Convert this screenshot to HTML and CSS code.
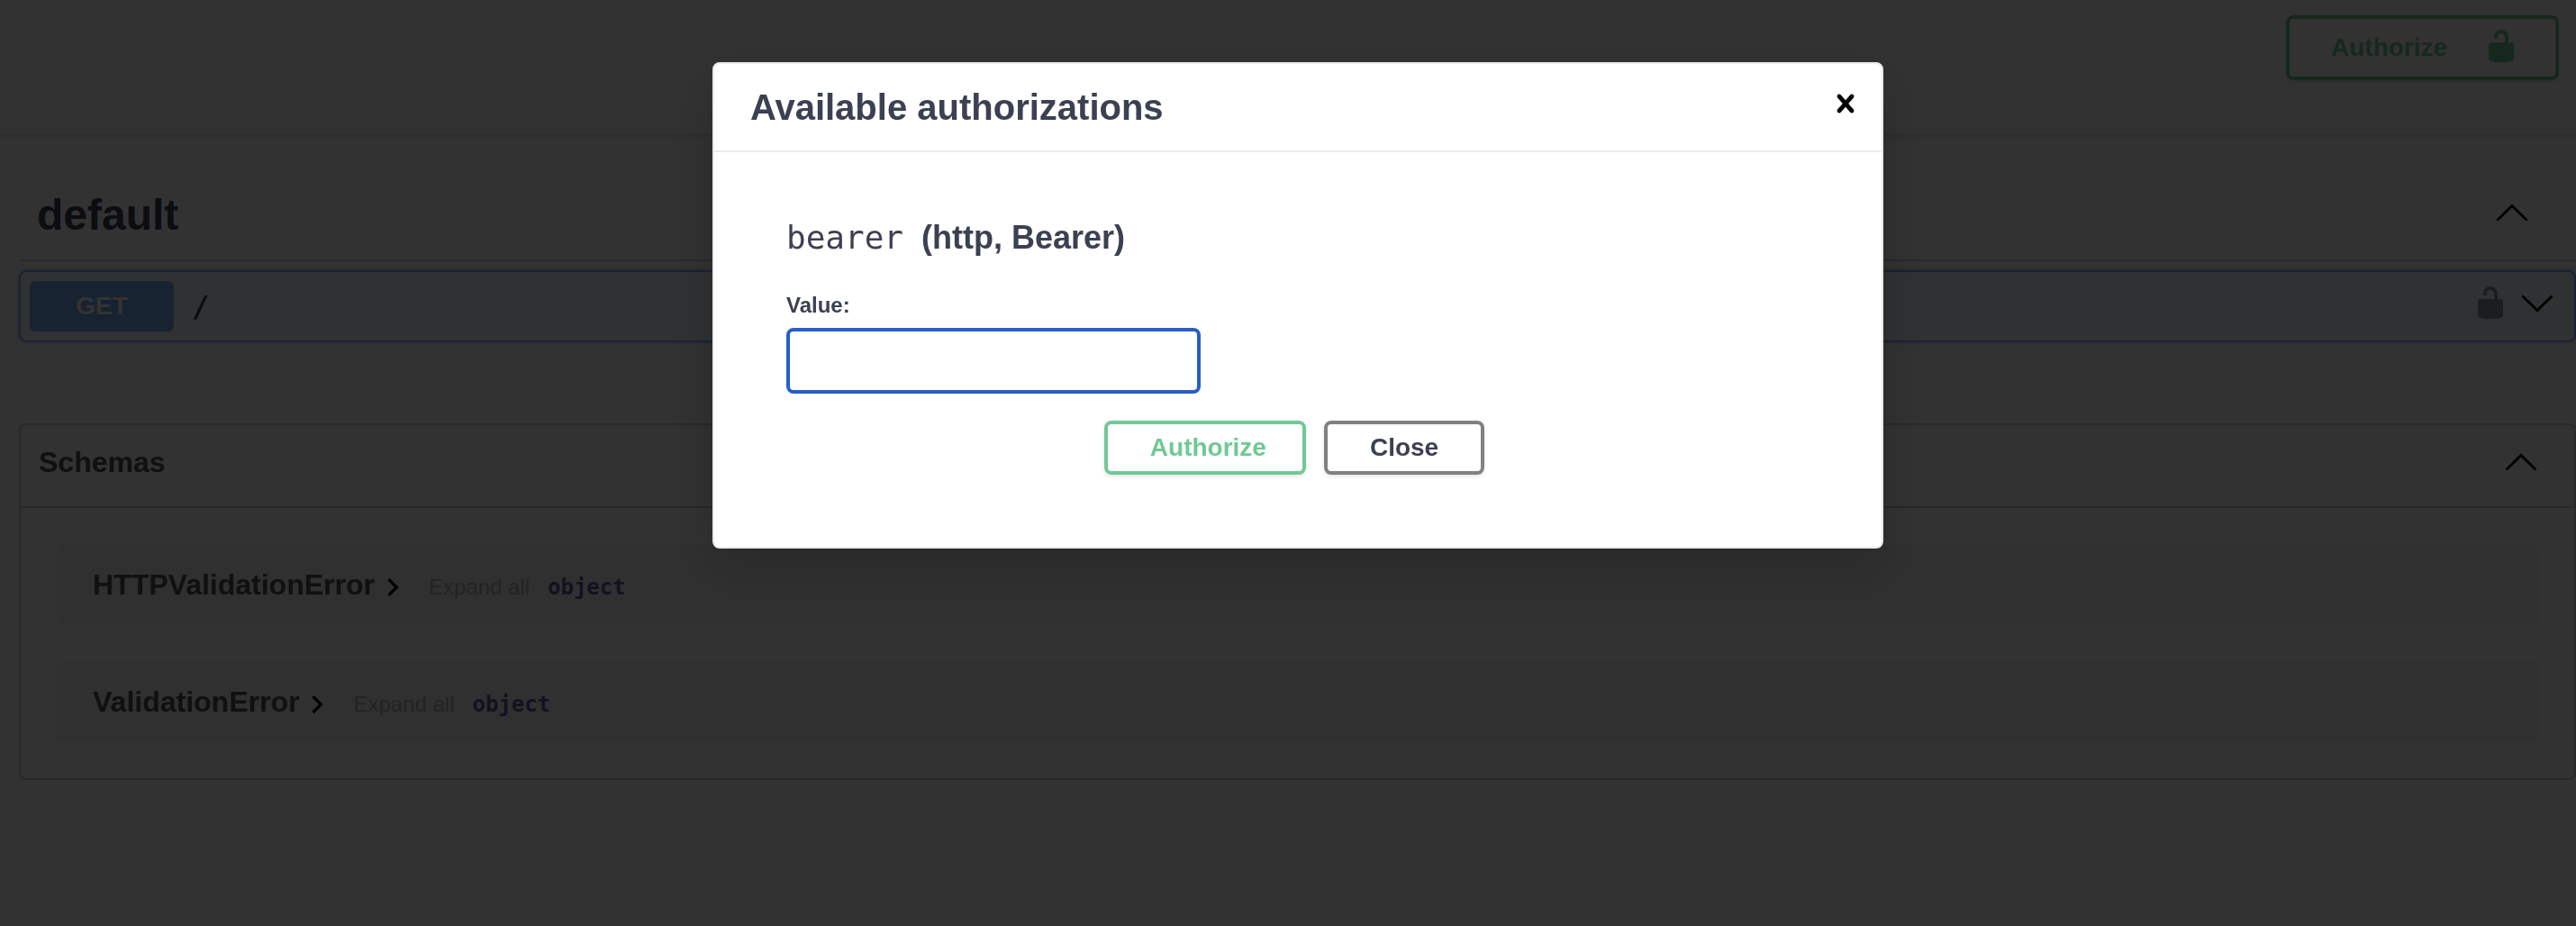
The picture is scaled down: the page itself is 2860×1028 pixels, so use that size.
FILE: index.html
```
<!DOCTYPE html>
<html lang="en">
<head>
<meta charset="utf-8">
<title>API documentation</title>
<link rel="stylesheet" href="styles.css">
</head>
<body>
<svg class="defs" width="0" height="0">
  <symbol id="unlocked" viewBox="0 0 20 20"><path d="M15.8 8H14V5.6C14 2.703 12.665 1 10 1 7.334 1 6 2.703 6 5.6V6h2v-.801C8 3.754 8.797 3 10 3c1.203 0 2 .754 2 2.199V8H4c-.553 0-1 .646-1 1.199V17c0 .549.428 1.139.951 1.307l1.197.387C5.672 18.861 6.55 19 7.1 19h5.8c.549 0 1.428-.139 1.951-.307l1.196-.387c.524-.167.953-.757.953-1.306V9.199C17 8.646 16.352 8 15.8 8z"/></symbol>
  <symbol id="arrow-up" viewBox="0 0 20 20"><path d="M17.418 14.908c.272.268.709.268.979 0s.271-.701 0-.969l-7.908-7.83c-.27-.268-.707-.268-.979 0l-7.908 7.83c-.27.268-.27.701 0 .969s.709.268.979 0L10 7.767z"/></symbol>
  <symbol id="arrow-down" viewBox="0 0 20 20"><path d="M17.418 6.109c.272-.268.709-.268.979 0s.271.701 0 .969l-7.908 7.83c-.27.268-.707.268-.979 0l-7.908-7.83c-.27-.268-.27-.701 0-.969s.709-.268.979 0L10 13.25z"/></symbol>
  <symbol id="caret" viewBox="0 0 24 24"><path d="M10 6L8.59 7.41 13.17 12l-4.58 4.59L10 18l6-6z"/></symbol>
  <symbol id="close" viewBox="0 0 20 20"><path d="M14.348 14.849c-.469.469-1.229.469-1.697 0L10 11.819l-2.651 3.029c-.469.469-1.229.469-1.697 0-.469-.469-.469-1.229 0-1.697l2.758-3.15-2.759-3.152c-.469-.469-.469-1.228 0-1.697s1.228-.469 1.697 0L10 8.183l2.651-3.031c.469-.469 1.228-.469 1.697 0s.469 1.229 0 1.697l-2.758 3.152 2.758 3.15c.469.469.469 1.229 0 1.698z"/></symbol>
</svg>

<main class="page">
  <header class="scheme">
    <button class="btn btn-authorize btn-wide"><span>Authorize</span><svg class="icon"><use href="#unlocked"/></svg></button>
  </header>

  <section class="tag">
    <div class="tag-head"><h3>default</h3><svg class="icon"><use href="#arrow-up"/></svg></div>
    <div class="op">
      <span class="method">GET</span>
      <span class="path">/</span>
      <svg class="icon op-lock"><use href="#unlocked"/></svg>
      <svg class="icon"><use href="#arrow-down"/></svg>
    </div>
  </section>

  <section class="models">
    <div class="models-head"><h4>Schemas</h4><svg class="icon"><use href="#arrow-up"/></svg></div>
    <div class="models-list">
      <div class="model"><b class="model-name">HTTPValidationError</b><svg class="caret"><use href="#caret"/></svg><span class="expand">Expand all</span><span class="type">object</span></div>
      <div class="model"><b class="model-name">ValidationError</b><svg class="caret"><use href="#caret"/></svg><span class="expand">Expand all</span><span class="type">object</span></div>
    </div>
  </section>
</main>

<div class="overlay">
  <div class="modal">
    <div class="modal-head"><h3>Available authorizations</h3><svg class="icon"><use href="#close"/></svg></div>
    <div class="modal-body">
      <h4><code>bearer</code><span>(http, Bearer)</span></h4>
      <label for="value">Value:</label>
      <input id="value" type="text">
      <div class="actions">
        <button class="btn btn-authorize">Authorize</button>
        <button class="btn">Close</button>
      </div>
    </div>
  </div>
</div>
</body>
</html>
```
FILE: styles.css
```
* { box-sizing: border-box; }
html, body { height: 100%; }
body {
  margin: 0;
  overflow: hidden;
  background: #fafafa;
  color: #3b4151;
  font-family: "Liberation Sans", Arial, sans-serif;
}
h3, h4 { margin: 0; }
.defs { position: absolute; }
.icon { width: 40px; height: 40px; flex: none; display: block; }

.btn {
  height: 60px;
  padding: 0 47px;
  border: 4px solid #808080;
  border-radius: 8px;
  background: transparent;
  box-shadow: 0 2px 4px rgba(0, 0, 0, .1);
  color: #3b4151;
  font: bold 28px/1 "Liberation Sans", Arial, sans-serif;
}
.btn-authorize { padding-right: 40px; border-color: #70c995; color: #70c995; fill: #70c995; }
.btn-wide {
  display: flex;
  align-items: center;
  justify-content: space-between;
  width: 303px;
  height: 72px;
  padding: 0 40px 0 46px;
}
.btn-wide .icon { margin-top: -4px; }

.scheme {
  display: flex;
  justify-content: flex-end;
  height: 149px;
  padding: 17px 19px 0 0;
  box-shadow: 0 2px 4px rgba(0, 0, 0, .15);
}

.tag { padding: 31px 0 0 21px; }
.tag-head {
  display: flex;
  align-items: center;
  justify-content: space-between;
  height: 110px;
  padding: 0 51px 0 20px;
  border-bottom: 2px solid #c9cacd;
}
.tag-head h3 { margin-top: 9px; font-size: 48px; line-height: 56px; }
.tag-head .icon { margin-top: 2px; }
.op {
  display: flex;
  align-items: center;
  height: 80px;
  margin-top: 10px;
  padding: 0 21px 0 10px;
  border: 2px solid #78aef5;
  border-radius: 8px;
  background: #eff3fa;
  box-shadow: 0 0 6px rgba(0, 0, 0, .19);
}
.method {
  width: 160px;
  height: 56px;
  border-radius: 6px;
  background: #78aef5;
  color: #fff;
  font-size: 28px;
  font-weight: bold;
  line-height: 56px;
  text-align: center;
  text-shadow: 0 2px 0 rgba(0, 0, 0, .1);
}
.path {
  flex: 1;
  padding-left: 20px;
  font: bold 32px/40px "DejaVu Sans Mono", monospace;
}
.op .icon { margin-top: -8px; }
.op .op-lock { margin-right: 12px; opacity: .4; }

.models {
  height: 396px;
  margin: 90px 0 0 21px;
  border: 2px solid #c9cacd;
  border-radius: 8px;
}
.models-head {
  display: flex;
  align-items: center;
  justify-content: space-between;
  height: 92px;
  padding: 0 39px 0 20px;
  border-bottom: 2px solid #c9cacd;
}
.models-head h4 { font-size: 32px; line-height: 40px; color: #505050; margin-top: -8px; }
.models-head .icon { margin-top: -10px; }
.models-list { display: grid; gap: 40px; padding: 40px 39px 0 40px; }
.model {
  display: flex;
  align-items: center;
  height: 90px;
  padding-left: 40px;
  border-radius: 8px;
  background: #f0f0f0;
}
.model-name { color: #505050; font-size: 32px; line-height: 40px; margin-top: -1px; }
.caret { width: 40px; height: 40px; margin-top: 6px; }
.expand { margin: 5px 0 0 20px; color: #afaeae; font-size: 24px; line-height: 30px; }
.type { margin: 5px 0 0 20px; color: #5b5a9c; font: bold 24px/30px "DejaVu Sans Mono", monospace; }

.overlay {
  position: fixed;
  inset: 0;
  padding: 69px 0 0 791px;
  background: rgba(0, 0, 0, .8);
}
.modal {
  width: 1300px;
  height: 540px;
  border: 2px solid #ebebeb;
  border-radius: 8px;
  background: #fff;
  box-shadow: 0 20px 60px rgba(0, 0, 0, .2);
}
.modal-head {
  display: flex;
  align-items: center;
  justify-content: space-between;
  height: 98px;
  padding: 0 20px 0 40px;
  border-bottom: 2px solid #ebebeb;
}
.modal-head h3 { font-size: 40px; line-height: 48px; }
.modal-head .icon { margin-top: -8px; }
.modal-body { padding: 71px 80px 0; }
.modal-body h4 { display: flex; align-items: baseline; font-size: 36px; line-height: 48px; }
.modal-body code { margin-right: 20px; font: 36px/48px "DejaVu Sans Mono", monospace; }
.modal-body label { display: block; margin-top: 37px; font-size: 24px; font-weight: bold; line-height: 28px; }
.modal-body input {
  display: block;
  width: 460px;
  height: 73px;
  margin-top: 11px;
  border: 4px solid #275fc5;
  border-radius: 8px;
  background: #fff;
}
.actions { display: flex; justify-content: center; gap: 20px; margin: 30px 8px 0 0; }
```
